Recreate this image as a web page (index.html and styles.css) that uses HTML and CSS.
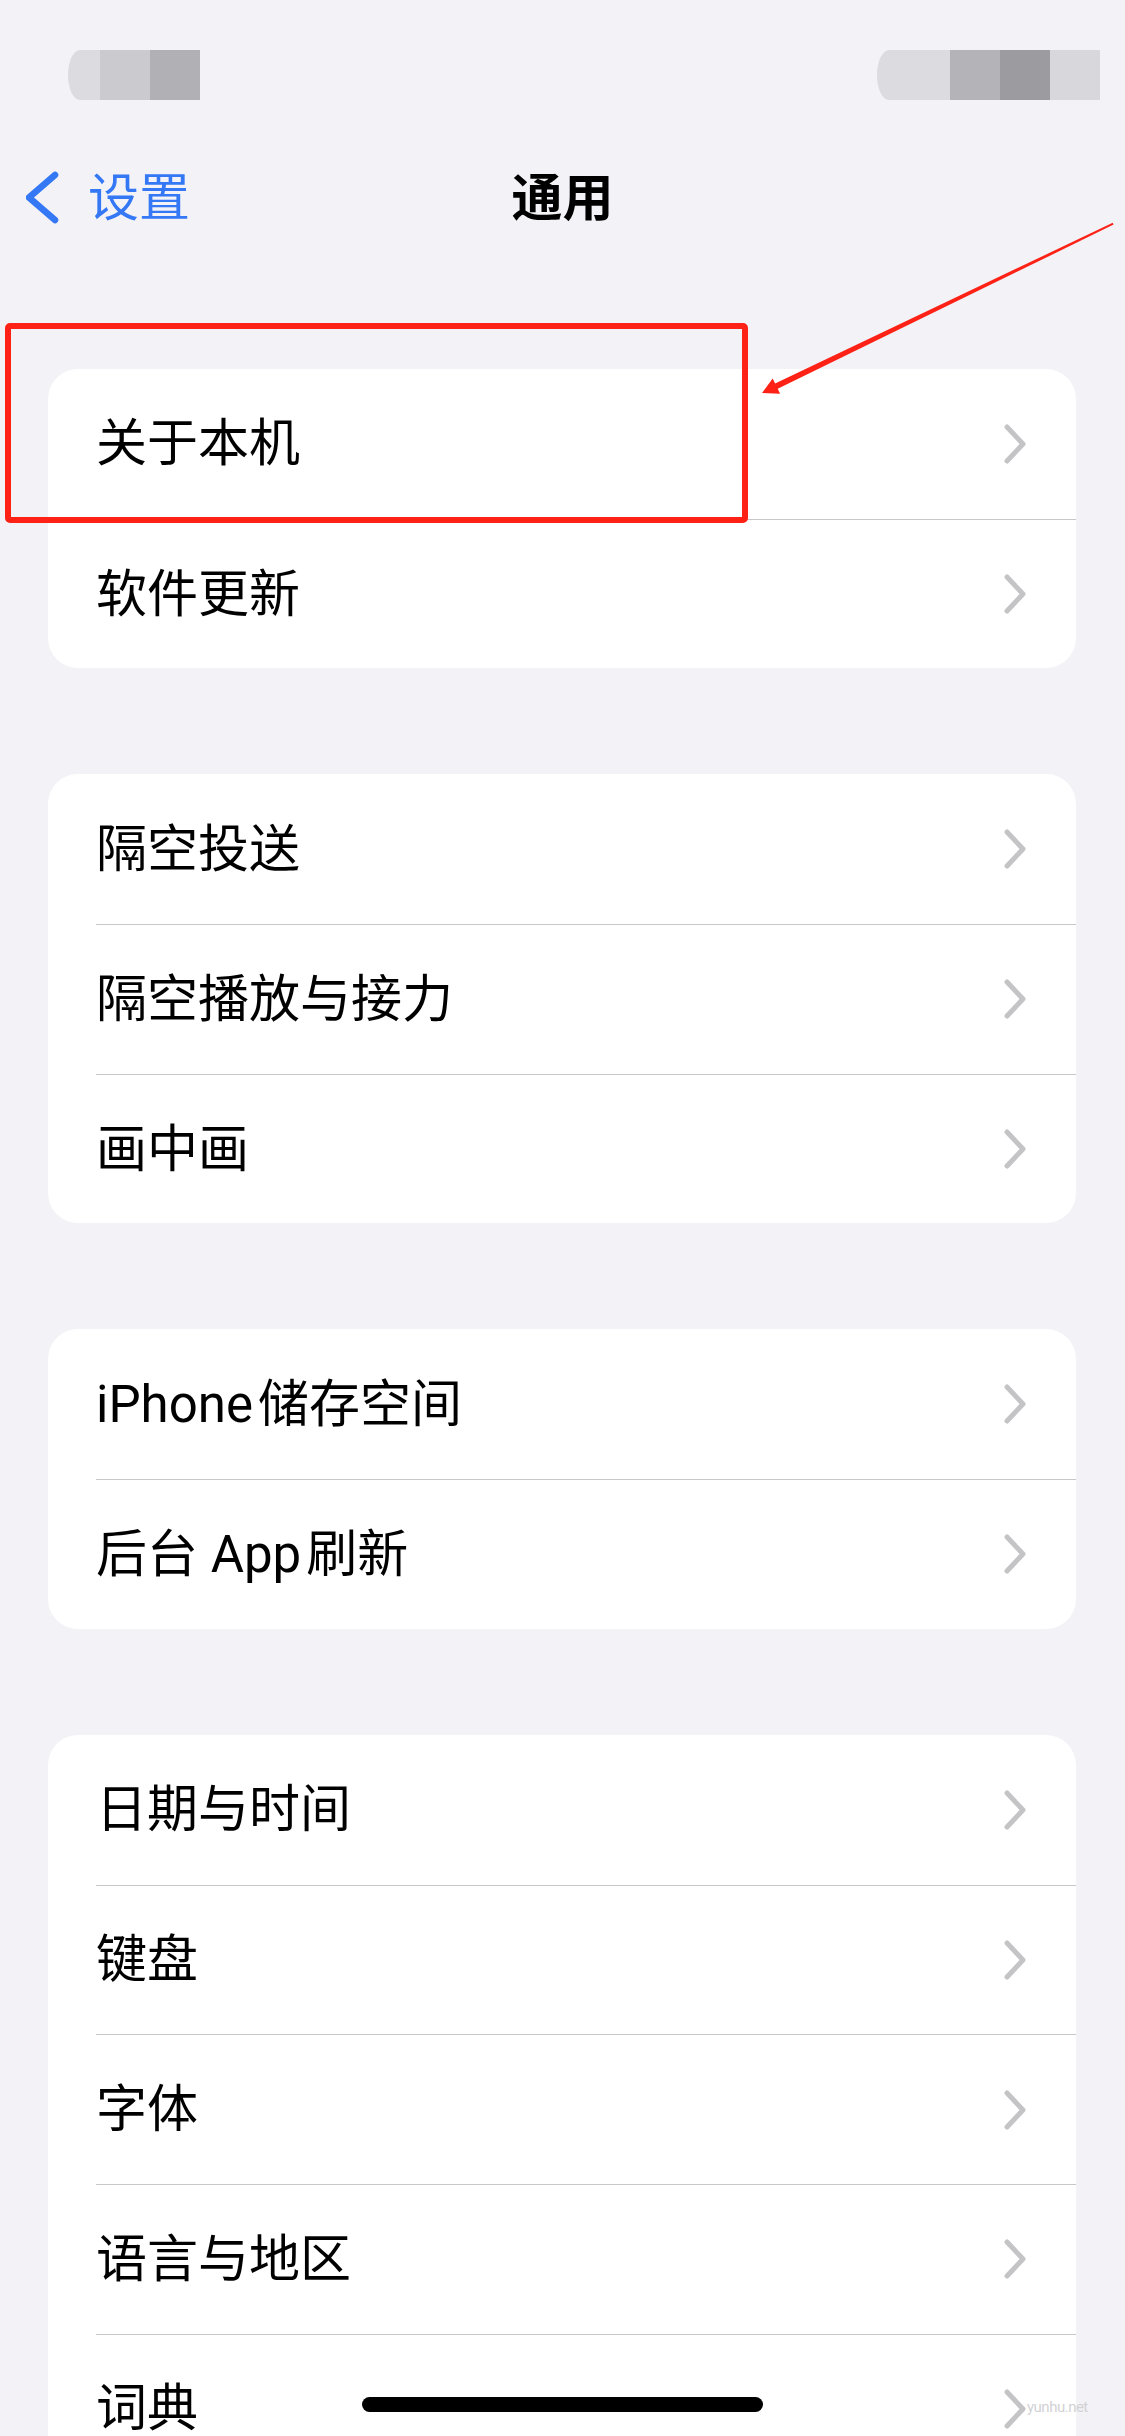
FILE: index.html
```html
<!DOCTYPE html>
<html lang="zh-CN">
<head>
<meta charset="utf-8">
<title>通用</title>
<link rel="stylesheet" href="styles.css">
</head>
<body>
<div class="page">
  <div class="status">
    <div class="blur-block">
      <span class="seg seg-round c1 w32"></span>
      <span class="seg c2 w50"></span>
      <span class="seg c3 w50"></span>
    </div>
    <div class="blur-block">
      <span class="seg seg-round c1 w23"></span>
      <span class="seg c1 w50"></span>
      <span class="seg c3b w50"></span>
      <span class="seg c4 w50"></span>
      <span class="seg c5 w50"></span>
    </div>
  </div>

  <div class="nav">
    <div class="back">
      <svg class="back-chev" width="36" height="56" viewBox="0 0 36 56"><path d="M29 5 L3 27.5 L29 50" fill="none" stroke="#3478f6" stroke-width="6.5" stroke-linecap="round" stroke-linejoin="round"/></svg>
      <span class="back-text">设置</span>
    </div>
    <div class="title">通用</div>
    <div class="nav-right"></div>
  </div>

  <div class="content">
    <div class="card">
      <div class="row"><div class="row-body"><span class="label">关于本机</span><svg class="chev" width="26" height="44" viewBox="0 0 26 44"><path d="M5 5 L21 22 L5 39" fill="none" stroke="#c4c4c7" stroke-width="5" stroke-linecap="round" stroke-linejoin="round"/></svg></div></div>
      <div class="row"><div class="row-body"><span class="label">软件更新</span><svg class="chev" width="26" height="44" viewBox="0 0 26 44"><path d="M5 5 L21 22 L5 39" fill="none" stroke="#c4c4c7" stroke-width="5" stroke-linecap="round" stroke-linejoin="round"/></svg></div></div>
    </div>

    <div class="card">
      <div class="row"><div class="row-body"><span class="label">隔空投送</span><svg class="chev" width="26" height="44" viewBox="0 0 26 44"><path d="M5 5 L21 22 L5 39" fill="none" stroke="#c4c4c7" stroke-width="5" stroke-linecap="round" stroke-linejoin="round"/></svg></div></div>
      <div class="row"><div class="row-body"><span class="label">隔空播放与接力</span><svg class="chev" width="26" height="44" viewBox="0 0 26 44"><path d="M5 5 L21 22 L5 39" fill="none" stroke="#c4c4c7" stroke-width="5" stroke-linecap="round" stroke-linejoin="round"/></svg></div></div>
      <div class="row"><div class="row-body"><span class="label">画中画</span><svg class="chev" width="26" height="44" viewBox="0 0 26 44"><path d="M5 5 L21 22 L5 39" fill="none" stroke="#c4c4c7" stroke-width="5" stroke-linecap="round" stroke-linejoin="round"/></svg></div></div>
    </div>

    <div class="card">
      <div class="row"><div class="row-body"><span class="label"><span class="latin">iPhone</span>储存空间</span><svg class="chev" width="26" height="44" viewBox="0 0 26 44"><path d="M5 5 L21 22 L5 39" fill="none" stroke="#c4c4c7" stroke-width="5" stroke-linecap="round" stroke-linejoin="round"/></svg></div></div>
      <div class="row"><div class="row-body"><span class="label">后台 <span class="latin">App</span>刷新</span><svg class="chev" width="26" height="44" viewBox="0 0 26 44"><path d="M5 5 L21 22 L5 39" fill="none" stroke="#c4c4c7" stroke-width="5" stroke-linecap="round" stroke-linejoin="round"/></svg></div></div>
    </div>

    <div class="card">
      <div class="row"><div class="row-body"><span class="label">日期与时间</span><svg class="chev" width="26" height="44" viewBox="0 0 26 44"><path d="M5 5 L21 22 L5 39" fill="none" stroke="#c4c4c7" stroke-width="5" stroke-linecap="round" stroke-linejoin="round"/></svg></div></div>
      <div class="row"><div class="row-body"><span class="label">键盘</span><svg class="chev" width="26" height="44" viewBox="0 0 26 44"><path d="M5 5 L21 22 L5 39" fill="none" stroke="#c4c4c7" stroke-width="5" stroke-linecap="round" stroke-linejoin="round"/></svg></div></div>
      <div class="row"><div class="row-body"><span class="label">字体</span><svg class="chev" width="26" height="44" viewBox="0 0 26 44"><path d="M5 5 L21 22 L5 39" fill="none" stroke="#c4c4c7" stroke-width="5" stroke-linecap="round" stroke-linejoin="round"/></svg></div></div>
      <div class="row"><div class="row-body"><span class="label">语言与地区</span><svg class="chev" width="26" height="44" viewBox="0 0 26 44"><path d="M5 5 L21 22 L5 39" fill="none" stroke="#c4c4c7" stroke-width="5" stroke-linecap="round" stroke-linejoin="round"/></svg></div></div>
      <div class="row"><div class="row-body"><span class="label">词典</span><svg class="chev" width="26" height="44" viewBox="0 0 26 44"><path d="M5 5 L21 22 L5 39" fill="none" stroke="#c4c4c7" stroke-width="5" stroke-linecap="round" stroke-linejoin="round"/></svg></div></div>
    </div>
  </div>

  <div class="highlight"></div>
  <svg class="arrow" width="1125" height="2436" viewBox="0 0 1125 2436">
    <polygon fill="#fe2216" points="1112.7,222.8 1113.6,224.6 777.7,388.8 780.1,393.7 762,393 772.7,378.4 775.1,383.4"/>
  </svg>
  <div class="watermark">yunhu.net</div>
  <div class="home-indicator"></div>
</div>
</body>
</html>
```

FILE: styles.css
```css
html, body {
  margin: 0;
  padding: 0;
  background: #f2f2f7;
}

.page {
  position: relative;
  width: 1125px;
  height: 2436px;
  overflow: hidden;
  background: #f2f2f7;
  font-family: "Roboto", "Noto Sans CJK SC", sans-serif;
  color: #000;
}

/* status bar (blurred) */
.status {
  height: 100px;
  box-sizing: border-box;
  padding: 50px 25px 0 68px;
  display: flex;
  justify-content: space-between;
}

.blur-block {
  display: flex;
  height: 50px;
}

.seg {
  display: block;
  height: 50px;
}

.seg-round {
  border-top-left-radius: 12px 25px;
  border-bottom-left-radius: 12px 25px;
}

.w23 { width: 23px; }
.w32 { width: 32px; }
.w50 { width: 50px; }

.c1 { background: #dcdce0; }
.c2 { background: #cbcbcf; }
.c3 { background: #b1b1b5; }
.c3b { background: #b4b4b8; }
.c4 { background: #9c9ca0; }
.c5 { background: #d8d8dc; }

/* navigation bar */
.nav {
  margin-top: 50px;
  height: 96px;
  display: grid;
  grid-template-columns: 1fr auto 1fr;
  align-items: center;
}

.back {
  display: flex;
  align-items: center;
  padding-left: 26px;
  color: #3478f6;
}

.back-chev {
  display: block;
  margin-right: 26px;
}

.back-text {
  font-size: 51px;
  line-height: 1;
}

.title {
  font-size: 51px;
  line-height: 1;
  font-weight: 700;
}

/* content */
.content {
  padding-top: 123px;
  display: flex;
  flex-direction: column;
  gap: 106px;
}

.card {
  margin: 0 49px 0 48px;
  background: #fff;
  border-radius: 30px;
  overflow: hidden;
}

.row {
  padding-left: 48px;
}

.row-body {
  height: 149.7px;
  box-sizing: border-box;
  display: flex;
  align-items: center;
  justify-content: space-between;
  padding-right: 48px;
}

.row + .row .row-body {
  border-top: 1px solid #c8c8ca;
}

.label {
  font-size: 51px;
  line-height: 1;
}

.latin {
  margin-right: 5px;
}

.chev {
  display: block;
  flex: none;
}

/* annotations */
.highlight {
  position: absolute;
  left: 5px;
  top: 323px;
  width: 743px;
  height: 200px;
  box-sizing: border-box;
  border: 6.5px solid #fe2216;
  border-radius: 5px;
}

.arrow {
  position: absolute;
  left: 0;
  top: 0;
  pointer-events: none;
}

.watermark {
  position: absolute;
  left: 1027px;
  top: 2400px;
  font-size: 15px;
  line-height: 1;
  letter-spacing: -0.5px;
  color: #d2d2d4;
}

.home-indicator {
  position: absolute;
  left: 362px;
  top: 2397px;
  width: 401px;
  height: 15px;
  border-radius: 8px;
  background: #000;
}
```
